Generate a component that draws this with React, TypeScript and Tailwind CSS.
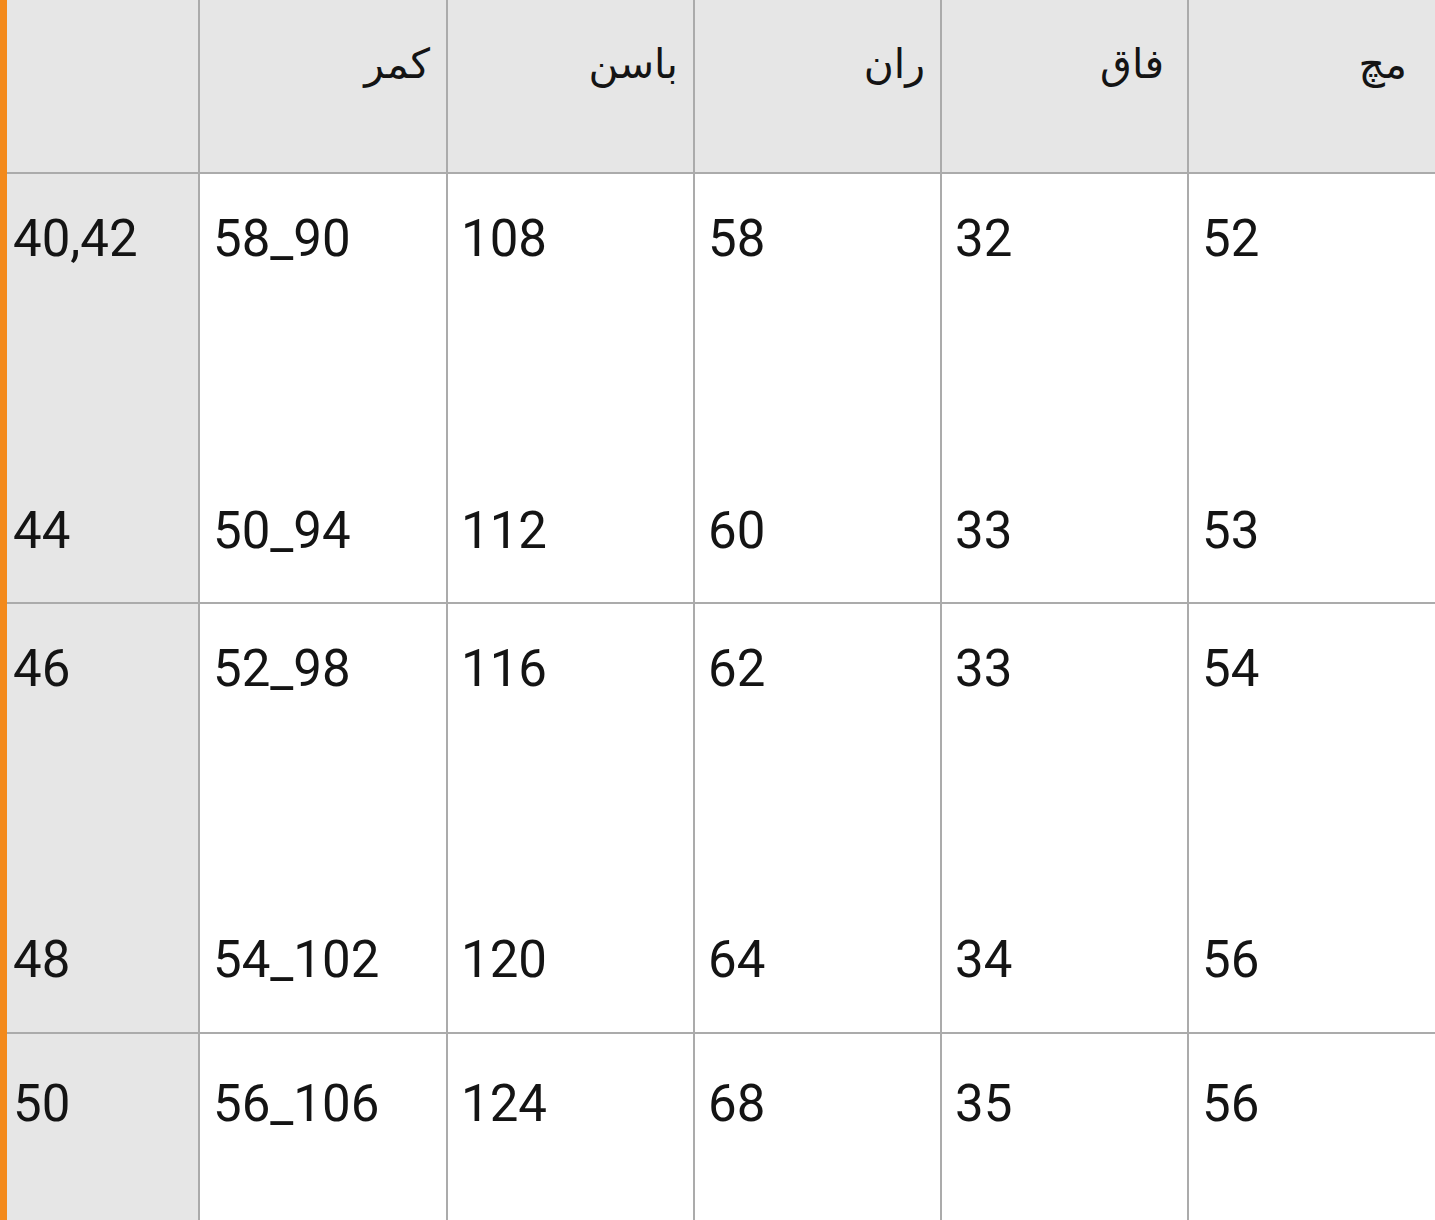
const headers = [
  { label: "کمر", pr: "pr-[16px]" },
  { label: "باسن", pr: "pr-[15px]" },
  { label: "ران", pr: "pr-[15px]" },
  { label: "فاق", pr: "pr-[23px]" },
  { label: "مچ", pr: "pr-[28px]" },
];

const rows = [
  {
    pt: "pt-[39px]",
    pb: "pb-[46px]",
    top: ["40,42", "58_90", "108", "58", "32", "52"],
    bottom: ["44", "50_94", "112", "60", "33", "53"],
  },
  {
    pt: "pt-[39px]",
    pb: "pb-[47px]",
    top: ["46", "52_98", "116", "62", "33", "54"],
    bottom: ["48", "54_102", "120", "64", "34", "56"],
  },
  {
    pt: "pt-[44px]",
    pb: "pb-[47px]",
    top: ["50", "56_106", "124", "68", "35", "56"],
    bottom: ["", "", "", "", "", ""],
  },
];

function App() {
  return (
    <div className="h-[1220px] w-[1435px] overflow-hidden bg-white flex">
      <div className="w-[7px] shrink-0 bg-[#f38a1c]"></div>
      <div
        className="flex-1 grid grid-cols-[193px_248px_247px_247px_247px_1fr] content-start text-[#141414]"
        style={{ fontFamily: '"Roboto", "DejaVu Sans", sans-serif' }}
      >
        {/* header row */}
        <div className="h-[174px] bg-[#e6e6e6] border-r-2 border-b-2 border-[#ababab]"></div>
        {headers.map((h, i) => (
          <div
            key={h.label}
            dir="rtl"
            className={
              "h-[174px] bg-[#e6e6e6] border-b-2 border-[#ababab] pt-[37px] text-[41px] leading-[54px] " +
              h.pr +
              (i < headers.length - 1 ? " border-r-2" : "")
            }
          >
            {h.label}
          </div>
        ))}

        {rows.map((r, ri) =>
          r.top.map((val, ci) => (
            <div
              key={ri + "-" + ci}
              className={
                "h-[430px] flex flex-col justify-between border-b-2 border-[#ababab] text-[51px] leading-[51px] " +
                r.pt +
                " " +
                r.pb +
                (ci === 0
                  ? " bg-[#e6e6e6] pl-[6px] border-r-2"
                  : ci < 5
                  ? " bg-white pl-[13px] border-r-2"
                  : " bg-white pl-[13px]")
              }
            >
              <span>{val}</span>
              <span>{r.bottom[ci]}</span>
            </div>
          ))
        )}
      </div>
    </div>
  );
}

export default App;
